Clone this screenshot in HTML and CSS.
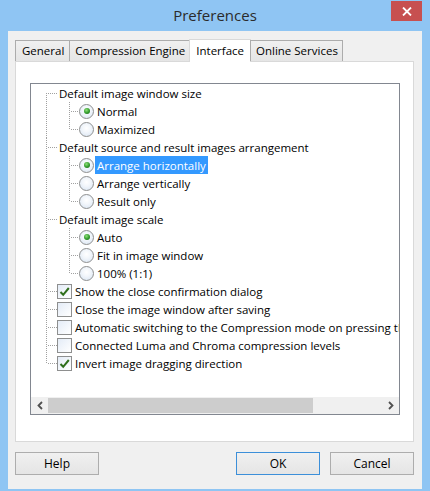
FILE: index.html
```html
<!DOCTYPE html>
<html>
<head>
<meta charset="utf-8">
<link rel="stylesheet" href="styles.css">
</head>
<body>
<div class="window">
  <div class="titlebar">
    <span class="title">Preferences</span>
    <div class="close">
      <svg width="10" height="9" viewBox="0 0 10 9"><path d="M1 0.5 L9 8.5 M9 0.5 L1 8.5" stroke="#fff" stroke-width="1.8" fill="none"/></svg>
    </div>
  </div>
  <div class="client">
    <div class="tabs">
      <div class="tab">General</div>
      <div class="tab">Compression Engine</div>
      <div class="tab active">Interface</div>
      <div class="tab">Online Services</div>
    </div>
    <div class="panel">
      <div class="treebox">
        <div class="tree-view">
          <ul class="tree root">
            <li><div class="row"><span class="label">Default image window size</span></div>
              <ul class="tree sub">
                <li><div class="row"><span class="radio checked"></span><span class="label">Normal</span></div></li>
                <li><div class="row"><span class="radio"></span><span class="label">Maximized</span></div></li>
              </ul>
            </li>
            <li><div class="row"><span class="label">Default source and result images arrangement</span></div>
              <ul class="tree sub">
                <li><div class="row"><span class="radio checked"></span><span class="label selected">Arrange horizontally</span></div></li>
                <li><div class="row"><span class="radio"></span><span class="label">Arrange vertically</span></div></li>
                <li><div class="row"><span class="radio"></span><span class="label">Result only</span></div></li>
              </ul>
            </li>
            <li><div class="row"><span class="label">Default image scale</span></div>
              <ul class="tree sub">
                <li><div class="row"><span class="radio checked"></span><span class="label">Auto</span></div></li>
                <li><div class="row"><span class="radio"></span><span class="label">Fit in image window</span></div></li>
                <li><div class="row"><span class="radio"></span><span class="label">100% (1:1)</span></div></li>
              </ul>
            </li>
            <li><div class="row"><span class="check checked"><svg width="13" height="13" viewBox="0 0 13 13"><path d="M2.5 7 L5.2 9.8 L10.8 3" stroke="#2f6f1c" stroke-width="2" fill="none"/></svg></span><span class="label">Show the close confirmation dialog</span></div></li>
            <li><div class="row"><span class="check"></span><span class="label">Close the image window after saving</span></div></li>
            <li><div class="row"><span class="check"></span><span class="label">Automatic switching to the Compression mode on pressing the Tab key</span></div></li>
            <li><div class="row"><span class="check"></span><span class="label">Connected Luma and Chroma compression levels</span></div></li>
            <li><div class="row"><span class="check checked"><svg width="13" height="13" viewBox="0 0 13 13"><path d="M2.5 7 L5.2 9.8 L10.8 3" stroke="#2f6f1c" stroke-width="2" fill="none"/></svg></span><span class="label">Invert image dragging direction</span></div></li>
          </ul>
        </div>
        <div class="hscroll">
          <div class="sb-btn"><svg width="8" height="9" viewBox="0 0 8 9"><path d="M6 1 L2.5 4.5 L6 8" stroke="#505050" stroke-width="1.8" fill="none"/></svg></div>
          <div class="sb-track"><div class="sb-thumb"></div></div>
          <div class="sb-btn"><svg width="8" height="9" viewBox="0 0 8 9"><path d="M2 1 L5.5 4.5 L2 8" stroke="#505050" stroke-width="1.8" fill="none"/></svg></div>
        </div>
      </div>
    </div>
    <div class="buttons">
      <button class="btn">Help</button>
      <span class="spacer"></span>
      <button class="btn default">OK</button>
      <button class="btn">Cancel</button>
    </div>
  </div>
</div>
</body>
</html>
```
FILE: styles.css
```css
* { box-sizing: border-box; }
html, body { margin: 0; padding: 0; }
body {
  width: 430px;
  height: 491px;
  overflow: hidden;
  font-family: "Open Sans", "Noto Sans", sans-serif;
  font-size: 11.5px;
  color: #000;
}
.window {
  width: 430px;
  height: 491px;
  background: #8fc5f3;
  display: flex;
  flex-direction: column;
}
.titlebar {
  height: 31px;
  display: grid;
  grid-template-columns: 1fr auto 1fr;
  align-items: start;
}
.title {
  grid-column: 2;
  font-size: 15px;
  line-height: 31px;
  color: #2b2b2b;
}
.close {
  grid-column: 3;
  justify-self: end;
  margin-right: 8px;
  margin-top: 1px;
  width: 31px;
  height: 20px;
  background: #c75050;
  display: flex;
  align-items: center;
  justify-content: center;
}
.client {
  margin: 0 8px;
  height: 458px;
  background: #f0f0f0;
  padding: 8px 8px 0 7px;
  display: flex;
  flex-direction: column;
}
.tabs {
  height: 23px;
  display: flex;
  align-items: flex-end;
  position: relative;
  z-index: 1;
  margin-bottom: -1px;
}
.tab {
  height: 21px;
  margin-bottom: 1px;
  padding: 0 4px 0 5px;
  border: 1px solid #acacac;
  border-bottom: none;
  background: linear-gradient(#f0f0f0, #e5e5e5);
  line-height: 20px;
  white-space: nowrap;
}
.tab:first-child { padding: 0 5px 0 6px; }
.tab + .tab { margin-left: -1px; }
.tab.active {
  height: 23px;
  margin-bottom: 0;
  background: #fff;
  border-color: #d9d9d9;
  padding: 0 6px;
  line-height: 21px;
}
.panel {
  height: 381px;
  background: #fff;
  border: 1px solid #d9d9d9;
  padding: 21px 13px 0 14px;
}
.treebox {
  height: 332px;
  border: 1px solid #828790;
  display: flex;
  flex-direction: column;
}
.tree-view {
  flex: 1;
  overflow: hidden;
}
.tree {
  list-style: none;
  margin: 0;
  position: relative;
}
.tree.root { padding-left: 26px; }
.tree.sub { padding-left: 22px; }
.tree li { position: relative; }
.tree li::before {
  content: "";
  position: absolute;
  left: -11px;
  top: 0;
  bottom: 0;
  width: 1px;
  background: repeating-linear-gradient(to bottom, #a0a0a0 0 1px, transparent 1px 2px);
}
.tree li:last-child::before { bottom: auto; height: 10px; }
.tree.root > li:first-child::before { top: 9px; }
.tree li::after {
  content: "";
  position: absolute;
  left: -10px;
  top: 9px;
  width: 10px;
  height: 1px;
  background: repeating-linear-gradient(to right, transparent 0 1px, #a0a0a0 1px 2px);
}
.tree.sub > li::before { left: -10px; }
.tree.sub > li::after { left: -9px; width: 9px; }
.row {
  height: 18px;
  display: flex;
  align-items: center;
  white-space: nowrap;
}
.label {
  padding: 1px 2px 0;
  line-height: 17px;
  height: 18px;
}
.label.selected {
  background: #3399ff;
  color: #fff;
}
.radio {
  width: 15px;
  height: 15px;
  border-radius: 50%;
  border: 1px solid #8e8f8f;
  background: radial-gradient(circle at 50% 40%, #ffffff 0, #f2f6fb 40%, #d6e3f2 100%);
  display: flex;
  align-items: center;
  justify-content: center;
  flex: none;
  margin-right: 1px;
}
.radio.checked::after {
  content: "";
  width: 6px;
  height: 6px;
  border-radius: 50%;
  background: radial-gradient(circle at 40% 35%, #8fe07a 0, #2f9a2a 55%, #1c5e1a 100%);
}
.check {
  width: 15px;
  height: 15px;
  border: 1px solid #8e8f8f;
  background: linear-gradient(135deg, #e4ecf7 0, #ffffff 100%);
  display: flex;
  align-items: center;
  justify-content: center;
  flex: none;
  margin-right: 1px;
}
.hscroll {
  height: 17px;
  display: flex;
  background: #f0f0f0;
}
.sb-btn {
  width: 17px;
  display: flex;
  align-items: center;
  justify-content: center;
  flex: none;
}
.sb-track {
  flex: 1;
  display: flex;
  padding: 1px 0;
}
.sb-thumb {
  width: 265px;
  background: #cdcdcd;
}
.buttons {
  margin-top: 10px;
  display: flex;
  gap: 10px;
}
.spacer { flex: 1; }
.btn {
  width: 84px;
  height: 23px;
  border: 1px solid #adadad;
  background: linear-gradient(#f0f0f0, #e5e5e5);
  font-family: "Open Sans", "Noto Sans", sans-serif;
  font-size: 12px;
  color: #000;
  padding: 0;
}
.btn.default { border-color: #3c8fd9; }
```
